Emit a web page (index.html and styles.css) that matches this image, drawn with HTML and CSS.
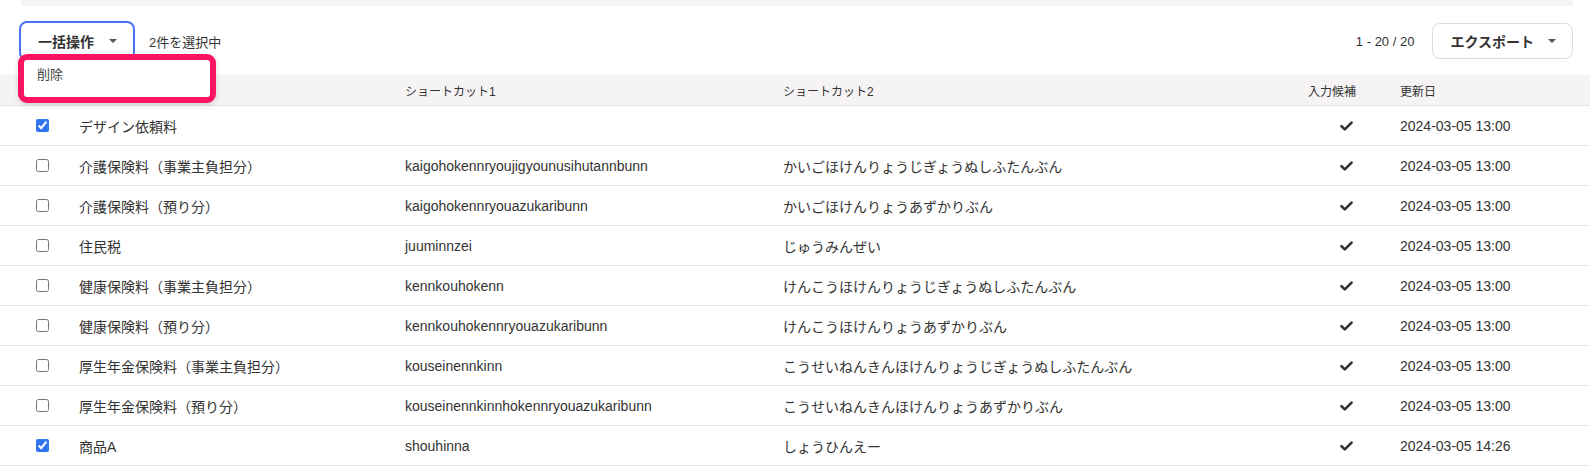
FILE: index.html
```html
<!DOCTYPE html>
<html lang="ja">
<head>
    <meta charset="UTF-8">
    <meta name="viewport" content="width=device-width, initial-scale=1.0">
    <title>ショートカット一覧</title>
    <link rel="stylesheet" href="styles.css">
</head>
<body>
    <div class="page">
        <div class="top-bar"></div>

        <div class="toolbar">
            <div class="bulk">
                <button class="btn btn-bulk">一括操作 <span class="caret"></span></button>
                <div class="bulk-menu">
                    <div class="menu-item">削除</div>
                </div>
            </div>
            <span class="selected-count">2件を選択中</span>
            <span class="spacer"></span>
            <span class="pager">1 - 20 / 20</span>
            <button class="btn btn-export">エクスポート <span class="caret"></span></button>
        </div>
    </div>

    <div class="list">
        <div class="row head">
            <div></div>
            <div></div>
            <div>ショートカット1</div>
            <div>ショートカット2</div>
            <div class="flag">入力候補</div>
            <div>更新日</div>
        </div>
        <div id="rows"></div>
    </div>

    <script>
        const items = [
            { checked: true,  name: 'デザイン依頼料', sc1: '', sc2: '', date: '2024-03-05 13:00' },
            { checked: false, name: '介護保険料（事業主負担分）', sc1: 'kaigohokennryoujigyounusihutannbunn', sc2: 'かいごほけんりょうじぎょうぬしふたんぶん', date: '2024-03-05 13:00' },
            { checked: false, name: '介護保険料（預り分）', sc1: 'kaigohokennryouazukaribunn', sc2: 'かいごほけんりょうあずかりぶん', date: '2024-03-05 13:00' },
            { checked: false, name: '住民税', sc1: 'juuminnzei', sc2: 'じゅうみんぜい', date: '2024-03-05 13:00' },
            { checked: false, name: '健康保険料（事業主負担分）', sc1: 'kennkouhokenn', sc2: 'けんこうほけんりょうじぎょうぬしふたんぶん', date: '2024-03-05 13:00' },
            { checked: false, name: '健康保険料（預り分）', sc1: 'kennkouhokennryouazukaribunn', sc2: 'けんこうほけんりょうあずかりぶん', date: '2024-03-05 13:00' },
            { checked: false, name: '厚生年金保険料（事業主負担分）', sc1: 'kouseinennkinn', sc2: 'こうせいねんきんほけんりょうじぎょうぬしふたんぶん', date: '2024-03-05 13:00' },
            { checked: false, name: '厚生年金保険料（預り分）', sc1: 'kouseinennkinnhokennryouazukaribunn', sc2: 'こうせいねんきんほけんりょうあずかりぶん', date: '2024-03-05 13:00' },
            { checked: true,  name: '商品A', sc1: 'shouhinna', sc2: 'しょうひんえー', date: '2024-03-05 14:26' }
        ];

        const checkIcon = '<svg class="check" width="13" height="10" viewBox="0 0 13 10"><path d="M1.5 5.2 L4.8 8.4 L11.6 1.6" fill="none" stroke="#333" stroke-width="2.6" stroke-linecap="round" stroke-linejoin="round"/></svg>';

        const rows = document.getElementById('rows');
        items.forEach(item => {
            const row = document.createElement('div');
            row.className = 'row';
            row.innerHTML =
                '<div class="pick"><input type="checkbox"' + (item.checked ? ' checked' : '') + '></div>' +
                '<div>' + item.name + '</div>' +
                '<div>' + item.sc1 + '</div>' +
                '<div>' + item.sc2 + '</div>' +
                '<div class="flag">' + checkIcon + '</div>' +
                '<div>' + item.date + '</div>';
            rows.appendChild(row);
        });
    </script>
</body>
</html>
```

FILE: styles.css
```css
* {
    margin: 0;
    padding: 0;
    box-sizing: border-box;
}

body {
    font-family: 'Liberation Sans', 'Noto Sans CJK JP', sans-serif;
    background: white;
    color: #333;
    font-size: 14px;
}

.page {
    padding: 0 17px 0 19px;
}

.top-bar {
    height: 6px;
    margin-left: 2px;
    background: #f5f3f3;
}

.toolbar {
    display: flex;
    align-items: center;
    height: 40px;
    margin-top: 15px;
}

.btn {
    display: flex;
    align-items: center;
    flex-shrink: 0;
    white-space: nowrap;
    font-family: inherit;
    font-size: 14px;
    font-weight: bold;
    color: #333;
    background: white;
    border: 1px solid #dcdcdc;
    border-radius: 8px;
    cursor: pointer;
}

.caret {
    width: 0;
    height: 0;
    border-left: 4px solid transparent;
    border-right: 4px solid transparent;
    border-top: 4px solid #555;
}

.bulk {
    position: relative;
}

.btn-bulk {
    height: 40px;
    padding: 0 16px 0 17px;
    border: 2px solid #4a72ee;
    gap: 15px;
}

.bulk-menu {
    position: absolute;
    left: -1px;
    top: 33px;
    width: 198px;
    height: 49px;
    background: white;
    border: 6px solid #fc1462;
    border-radius: 9px;
    box-shadow: 0 2px 6px rgba(0,0,0,0.15);
    z-index: 2;
}

.menu-item {
    padding: 5px 0 0 13px;
    line-height: 20px;
    font-size: 13px;
    color: #444;
}

.selected-count {
    margin-left: 14px;
    font-size: 13px;
}

.spacer {
    flex: 1;
}

.pager {
    font-size: 13px;
    margin-right: 18px;
}

.btn-export {
    height: 36px;
    padding: 0 16px 0 17px;
    gap: 14px;
}

.list {
    margin-top: 14px;
}

.row {
    display: grid;
    grid-template-columns: 79px 326px 378px 507px 110px 190px;
    align-items: center;
    height: 40px;
    border-bottom: 1px solid #e6e6e6;
    white-space: nowrap;
}

.row.head {
    height: 31px;
    background: #f5f3f3;
    font-size: 12px;
}

.pick {
    padding-left: 36px;
}

.pick input {
    display: block;
    width: 13px;
    height: 13px;
    margin: 0;
    accent-color: #2f74f0;
}

.flag {
    text-align: right;
    padding-right: 44px;
}

.check {
    display: block;
    margin-left: auto;
    margin-right: 3px;
}
```
